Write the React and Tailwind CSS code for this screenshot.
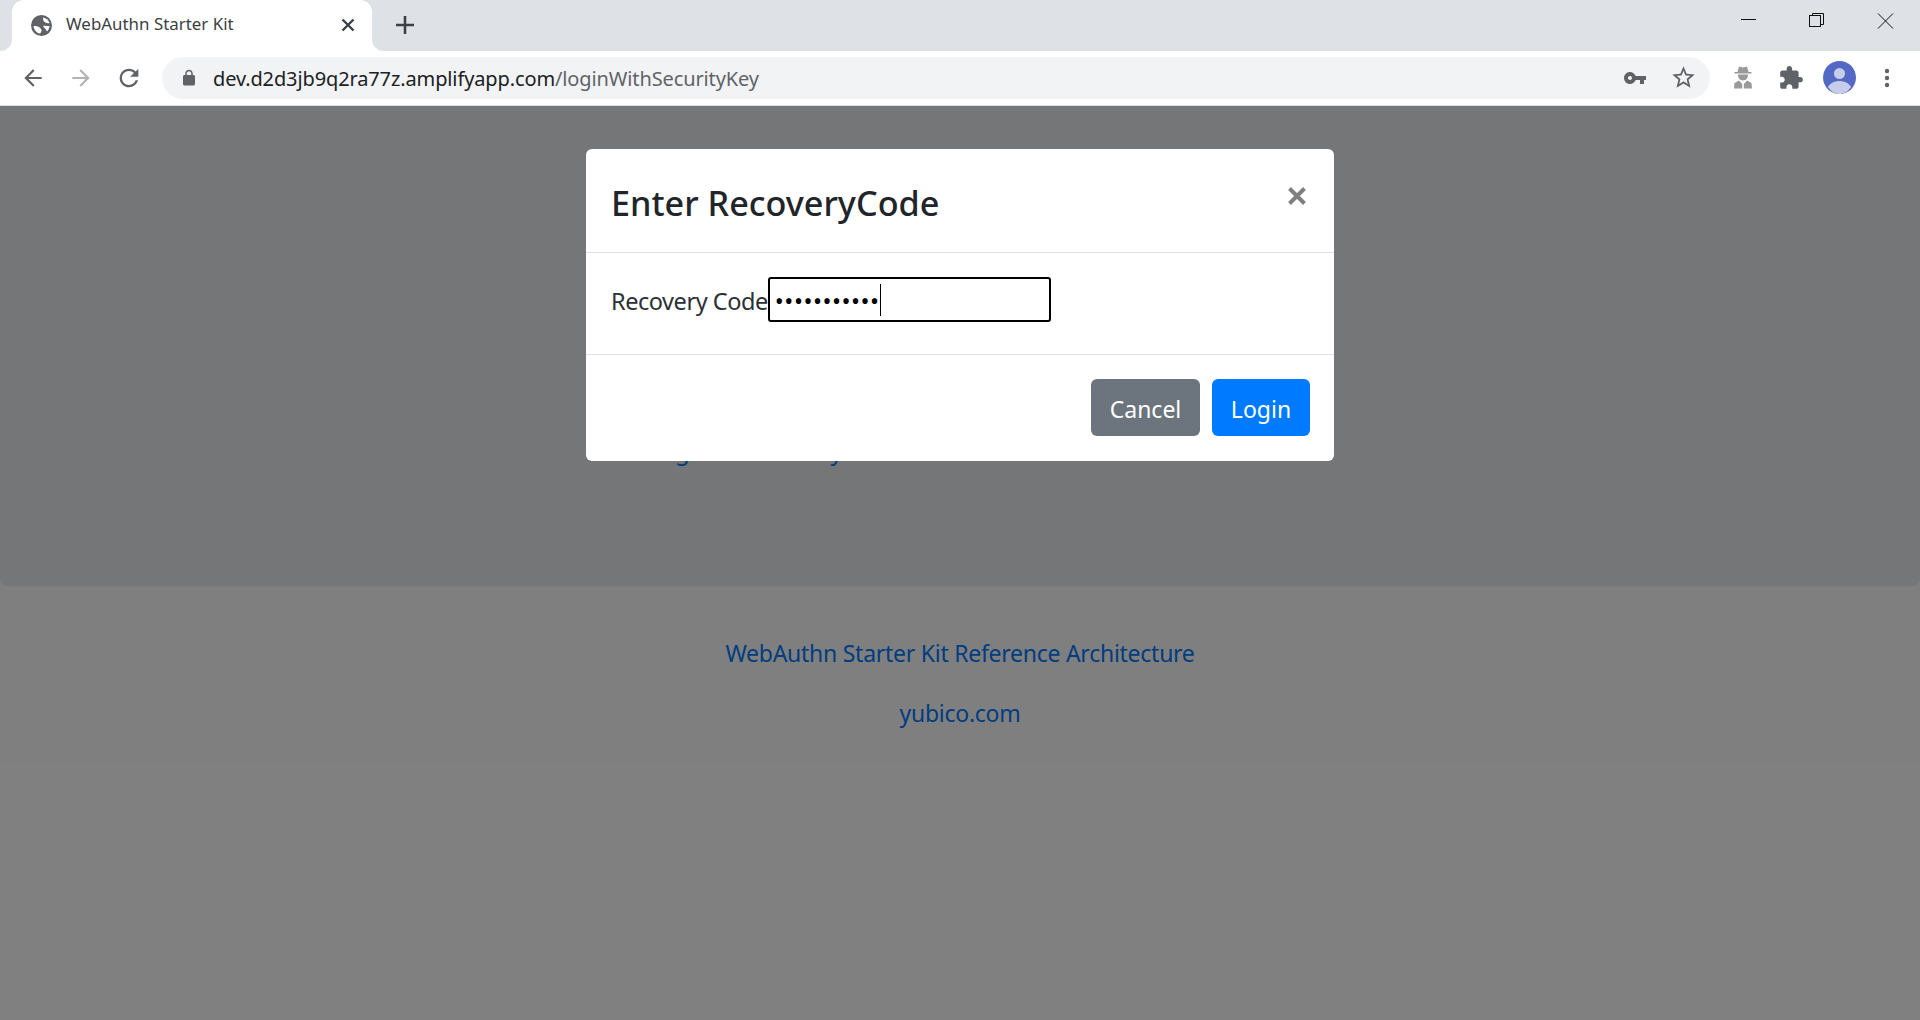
const font = { fontFamily: '"Noto Sans", sans-serif' };

function Icon({ size = 24, color = "#5f6368", d, className = "" }) {
  return (
    <svg width={size} height={size} viewBox="0 0 24 24" fill={color} className={className}>
      <path d={d} />
    </svg>
  );
}

const paths = {
  back: "M20 11H7.83l5.59-5.59L12 4l-8 8 8 8 1.41-1.41L7.83 13H20v-2z",
  forward: "M12 4l-1.41 1.41L16.17 11H4v2h12.17l-5.58 5.59L12 20l8-8z",
  reload:
    "M17.65 6.35C16.2 4.9 14.21 4 12 4c-4.42 0-7.99 3.58-7.99 8s3.57 8 7.99 8c3.73 0 6.84-2.55 7.73-6h-2.08c-.82 2.33-3.04 4-5.65 4-3.31 0-6-2.69-6-6s2.69-6 6-6c1.66 0 3.14.69 4.22 1.78L13 11h7V4l-2.35 2.35z",
  lock:
    "M18 8h-1V6c0-2.76-2.24-5-5-5S7 3.24 7 6v2H6c-1.1 0-2 .9-2 2v10c0 1.1.9 2 2 2h12c1.1 0 2-.9 2-2V10c0-1.1-.9-2-2-2zM9 6c0-1.66 1.34-3 3-3s3 1.34 3 3v2H9V6z",
  key:
    "M12.65 10C11.83 7.67 9.61 6 7 6c-3.31 0-6 2.69-6 6s2.69 6 6 6c2.61 0 4.83-1.67 5.65-4H17v4h4v-4h2v-4H12.65zM7 14c-1.1 0-2-.9-2-2s.9-2 2-2 2 .9 2 2-.9 2-2 2z",
  star:
    "M22 9.24l-7.19-.62L12 2 9.19 8.63 2 9.24l5.46 4.73L5.82 21 12 17.27 18.18 21l-1.63-7.03L22 9.24zM12 15.4l-3.76 2.27 1-4.28-3.32-2.88 4.38-.38L12 6.1l1.71 4.04 4.38.38-3.32 2.88 1 4.28L12 15.4z",
  puzzle:
    "M20.5 11H19V7c0-1.1-.9-2-2-2h-4V3.5C13 2.12 11.88 1 10.5 1S8 2.12 8 3.5V5H4c-1.1 0-1.99.9-1.99 2v3.8H3.5c1.49 0 2.7 1.21 2.7 2.7s-1.21 2.7-2.7 2.7H2V20c0 1.1.9 2 2 2h3.8v-1.5c0-1.49 1.21-2.7 2.7-2.7 1.49 0 2.7 1.21 2.7 2.7V22H17c1.1 0 2-.9 2-2v-4h1.5c1.38 0 2.5-1.12 2.5-2.5S21.88 11 20.5 11z",
};

function ToolButton({ children }) {
  return <div className="flex h-12 w-12 shrink-0 items-center justify-center">{children}</div>;
}

export default function App() {
  return (
    <div className="flex h-[1020px] w-[1920px] flex-col overflow-hidden bg-white" style={font}>
      {/* Tab strip */}
      <div className="flex h-[51px] shrink-0 items-end bg-[#dee1e6]">
        <div className="h-3 w-3 shrink-0 bg-white">
          <div className="h-full w-full rounded-br-[12px] bg-[#dee1e6]" />
        </div>
        <div className="flex h-[51px] w-[360px] shrink-0 items-center rounded-t-[12px] bg-white pb-[1px] pl-[19px] pr-[17px]">
          <svg width="21" height="21" viewBox="0 0 21 21" className="shrink-0">
            <circle cx="10.500" cy="10.500" r="10.500" fill="#5f6368" />
            <path d="M12 2.500 C15 3 17.500 5 18.500 8 C16 9 14 7.500 12.500 6 Z" fill="#fff" />
            <path d="M2.500 11 C6 10.500 9.500 12 10.500 15 C10.500 16.500 10 17.500 9 18.500 C5.500 18 3 15 2.500 11 Z" fill="#fff" />
            <path d="M12 11 C14 10 16 11.500 18.500 11 C18.500 13 17.500 15 16 16.500 C15 14 13 13 12 11 Z" fill="#fff" />
          </svg>
          <span className="ml-[14px] flex-1 pb-[1px] text-[16.9px] leading-none whitespace-nowrap text-[#3c4043]">WebAuthn Starter Kit</span>
          <svg width="14" height="14" viewBox="0 0 14 14" stroke="#3c4043" strokeWidth="2.4" className="shrink-0">
            <path d="M1.500 1.500l11 11M12.500 1.500l-11 11" />
          </svg>
        </div>
        <div className="h-3 w-3 shrink-0 bg-white">
          <div className="h-full w-full rounded-bl-[12px] bg-[#dee1e6]" />
        </div>
        <div className="mb-[17px] ml-[12px] flex h-[18px] w-[18px] shrink-0">
          <svg width="18" height="18" viewBox="0 0 18 18" stroke="#3c4043" strokeWidth="2.6">
            <path d="M9 0v18M0 9h18" />
          </svg>
        </div>
        <div className="flex-1" />
        <div className="mb-[22px] flex w-[179px] shrink-0 items-start">
          <svg width="170" height="16" viewBox="0 0 170 16" fill="none" stroke="#111" strokeWidth="1" className="shrink-0">
            <path d="M0 6.500h15" />
            <rect x="68.500" y="2.500" width="11" height="11" />
            <path d="M71.500 2.500V0.500h11v11h-3" />
            <path d="M137 0.500l15 15M152 0.500l-15 15" />
          </svg>
        </div>
      </div>

      {/* Toolbar */}
      <div className="flex h-[55px] shrink-0 items-center border-b border-[#dadce0] bg-white pb-px pl-[9px] pr-[9px]">
        <ToolButton><Icon size={26} className="-ml-[1px]" d={paths.back} /></ToolButton>
        <ToolButton><Icon size={26} color="#b1b3b6" d={paths.forward} /></ToolButton>
        <ToolButton><Icon size={28} d={paths.reload} /></ToolButton>
        <div className="ml-[9px] flex h-[42px] min-w-0 flex-1 items-center rounded-[21px] bg-[#f1f3f4] pl-[18px] pr-[13px]">
          <Icon size={18} d={paths.lock} />
          <span className="ml-[15px] flex-1 pt-[2px] text-[20px] leading-none whitespace-nowrap tracking-[-0.12px] text-[#202124]">
            dev.d2d3jb9q2ra77z.amplifyapp.com<span className="text-[#5f6368]">/loginWithSecurityKey</span>
          </span>
          <Icon size={24} className="-ml-px" d={paths.key} />
          <Icon size={27} className="ml-[23px]" d={paths.star} />
        </div>
        <div className="ml-[9px] flex shrink-0 items-center">
          <ToolButton>
            <svg width="20" height="23" viewBox="0 0 20 23" fill="#9a9a9a">
              <path d="M6 .500l4 1 4-1 1.500 5.500h3v1.500H1.500V6h3z" />
              <path d="M5 8.500h10c.3 3-2 6-5 6s-5.300-3-5-6z" />
              <path d="M1 22.500l.5-5.500 4.500-2.500 3.200 3.500v4.500zM19 22.500l-.5-5.500-4.500-2.500-3.200 3.500v4.500z" />
            </svg>
          </ToolButton>
          <ToolButton><Icon size={26} d={paths.puzzle} /></ToolButton>
          <ToolButton>
            <svg width="33" height="33" viewBox="0 0 33 33">
              <circle cx="16.500" cy="16.500" r="16.500" fill="#5469c4" />
              <circle cx="16.500" cy="12.500" r="5.500" fill="#c6cdea" />
              <path d="M5 26c2-4 7-6 11.500-6S26 22 28 26c-3 4.500-7 7-11.500 7S8 30.500 5 26z" fill="#c6cdea" />
            </svg>
          </ToolButton>
          <ToolButton>
            <svg width="6" height="20" viewBox="0 0 6 20" fill="#5f6368">
              <circle cx="3" cy="3" r="2.200" />
              <circle cx="3" cy="10" r="2.200" />
              <circle cx="3" cy="17" r="2.200" />
            </svg>
          </ToolButton>
        </div>
      </div>

      {/* Page */}
      <div className="relative flex-1 bg-white text-[24px] leading-[36px]">
        <div className="h-[480px] rounded-b-[6px] bg-[#e9ecef] pl-[647px] pt-[327px]">
          <a className="whitespace-nowrap tracking-[0.45px] text-[#007bff]">Login to Security</a>
        </div>
        <div className="flex flex-col items-center pt-[49px] text-[23px] tracking-[-0.26px] text-[#007bff]">
          <a className="whitespace-nowrap">WebAuthn Starter Kit Reference Architecture</a>
          <a className="mt-6 whitespace-nowrap">yubico.com</a>
        </div>

        {/* Backdrop */}
        <div className="absolute inset-0 bg-black/50">
          <div className="mx-auto mt-[43px] w-[748px] rounded-[6px] bg-white text-[#212529]">
            <div className="flex h-[104px] items-start justify-between border-b border-[#dee2e6] pl-[25px] pr-[28px]">
              <h5 className="mt-[31px] text-[34.2px] leading-[45px] font-medium whitespace-nowrap">Enter RecoveryCode</h5>
              <svg width="18" height="18" viewBox="0 0 18 18" stroke="#7f7f7f" strokeWidth="4" className="mt-[38px]">
                <path d="M1.500 1.500l15 15M16.500 1.500l-15 15" />
              </svg>
            </div>
            <div className="flex h-[102px] items-center border-b border-[#dee2e6] pb-[5px] pl-[25px]">
              <label className="whitespace-nowrap text-[23.5px] tracking-[-0.45px] text-[#2b3035]">Recovery Code</label>
              <div className="relative mb-[3px]">
                <input
                  type="password"
                  readOnly
                  value="12345678901"
                  className="block h-[45px] w-[283px] rounded-[3px] border-2 border-black bg-white pl-[5px] pt-[2px] text-[24px] tracking-[0.5px] text-black outline-none"
                />
                <span className="absolute left-[112px] top-[7px] h-[32px] w-px bg-black" />
              </div>
            </div>
            <div className="flex h-[106px] items-start justify-end gap-3 pr-[24px] pt-[24px]">
              <button className="h-[57px] w-[109px] rounded-[6px] bg-[#6c757d] pt-[3px] text-[23px] text-white">Cancel</button>
              <button className="h-[57px] w-[98px] rounded-[6px] bg-[#007bff] pt-[3px] text-[23px] text-white">Login</button>
            </div>
          </div>
        </div>
      </div>
    </div>
  );
}
